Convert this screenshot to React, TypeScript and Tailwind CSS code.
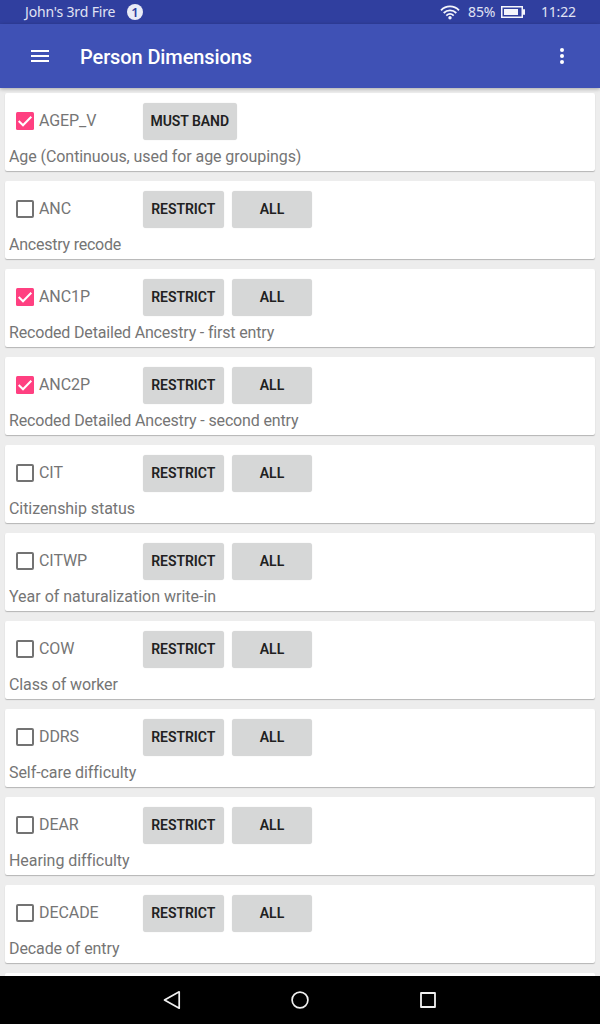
type Dimension = {
  code: string;
  description: string;
  tracking: string;
  checked?: boolean;
  mustBand?: boolean;
};

const dimensions: Dimension[] = [
  { code: "AGEP_V", description: "Age (Continuous, used for age groupings)", tracking: "tracking-[-0.075px]", checked: true, mustBand: true },
  { code: "ANC", description: "Ancestry recode", tracking: "tracking-[-0.23px]" },
  { code: "ANC1P", description: "Recoded Detailed Ancestry - first entry", tracking: "tracking-[-0.17px]", checked: true },
  { code: "ANC2P", description: "Recoded Detailed Ancestry - second entry", tracking: "tracking-[-0.15px]", checked: true },
  { code: "CIT", description: "Citizenship status", tracking: "tracking-[-0.06px]" },
  { code: "CITWP", description: "Year of naturalization write-in", tracking: "tracking-[-0.01px]" },
  { code: "COW", description: "Class of worker", tracking: "tracking-[-0.12px]" },
  { code: "DDRS", description: "Self-care difficulty", tracking: "tracking-[-0.06px]" },
  { code: "DEAR", description: "Hearing difficulty", tracking: "tracking-[-0.06px]" },
  { code: "DECADE", description: "Decade of entry", tracking: "tracking-[-0.1px]" },
];

function StatusBar() {
  return (
    <div className="flex h-6 shrink-0 items-center bg-[#303f9f] pl-6 pr-6 font-['Noto_Sans',sans-serif] text-[14px] leading-6 text-[#e0e3f4]">
      <span className="w-[92px] whitespace-nowrap pl-px text-[14px] tracking-[-0.15px]">John's 3rd Fire</span>
      <span className="ml-[11px] flex size-4 items-center justify-center rounded-full bg-[#eaecf7] text-[13px] font-semibold leading-4 text-[#303f9f]">
        1
      </span>
      <svg className="ml-auto" width="20" height="15" viewBox="0 0 20 15" fill="none" stroke="#f4f5fc" strokeWidth="1.8">
        <path d="M1 5.3C6 .1 14 .1 19 5.3" />
        <path d="M3.7 8C7.3 4.4 12.7 4.4 16.3 8" />
        <path d="M6.3 10.6c2.2-2.1 5.2-2.1 7.4 0" />
        <circle cx="10" cy="12.7" r="1.7" fill="#f4f5fc" stroke="none" />
      </svg>
      <span className="ml-2 w-[29px] whitespace-nowrap text-[14px] tracking-[-0.1px]">85%</span>
      <svg className="ml-1" width="24" height="12" viewBox="0 0 24 12" fill="#f4f5fc">
        <path fillRule="evenodd" d="M0 0h22v3.3h2v5.4h-2V12H0zM1.5 1.5v9h19v-9z" />
        <path d="M3 3h14v6H3z" />
      </svg>
      <span className="ml-4 w-[35px] whitespace-nowrap text-[14px] tracking-[-0.2px]">11:22</span>
    </div>
  );
}

function AppBar() {
  return (
    <header className="relative z-10 flex h-16 shrink-0 items-center bg-[#3f51b5] pl-7 pr-[26px] text-white shadow-[0_1px_4px_rgba(0,0,0,0.3)]">
      <svg width="24" height="24" viewBox="0 0 24 24" fill="currentColor">
        <path d="M3 18h18v-2H3v2zm0-5h18v-2H3v2zm0-7v2h18V6H3z" />
      </svg>
      <h1 className="ml-7 pt-0.5 text-[20px] font-medium leading-6 tracking-[-0.11px]">Person Dimensions</h1>
      <svg className="ml-auto" width="24" height="24" viewBox="0 0 24 24" fill="currentColor">
        <circle cx="12" cy="6" r="2" />
        <circle cx="12" cy="12" r="2" />
        <circle cx="12" cy="18" r="2" />
      </svg>
    </header>
  );
}

function CheckMark({ checked }: { checked?: boolean }) {
  return (
    <svg className="shrink-0" width="24" height="24" viewBox="0 0 24 24">
      {checked ? (
        <>
          <rect x="3" y="3" width="18" height="18" rx="1.5" fill="#ff4081" />
          <path d="M5.7 12l4.3 4.3 8.3-8.6" fill="none" stroke="#fff" strokeWidth="2" />
        </>
      ) : (
        <rect x="4" y="4" width="16" height="16" rx="1" fill="none" stroke="#737373" strokeWidth="2" />
      )}
    </svg>
  );
}

function ActionButton({ label, width }: { label: string; width: string }) {
  return (
    <button
      className={`${width} h-[37px] rounded-[3px] bg-[#d6d7d7] pb-px text-center text-[14px] font-semibold leading-9 tracking-[-0.05px] text-[#212121] shadow-[0_0_1px_rgba(0,0,0,0.16)]`}
    >
      {label}
    </button>
  );
}

function DimensionCard({ item }: { item: Dimension }) {
  return (
    <li className="h-[78px] shrink-0 rounded-[2px] bg-white shadow-[0_1px_1px_rgba(0,0,0,0.24)]">
      <div className="flex h-[56px] items-start pl-2 pt-[10px]">
        <label className="flex h-9 w-[129.5px] items-center text-[16px] leading-6 text-[#757575]">
          <CheckMark checked={item.checked} />
          <span className="ml-0.5 tracking-[-0.08px]">{item.code}</span>
        </label>
        <div className="flex gap-2">
          {item.mustBand ? (
            <ActionButton label="MUST BAND" width="w-[94.5px]" />
          ) : (
            <>
              <ActionButton label="RESTRICT" width="w-[81.5px]" />
              <ActionButton label="ALL" width="w-20" />
            </>
          )}
        </div>
      </div>
      <p className={`-mt-px pl-1 text-[16px] leading-[18px] text-[#757575] ${item.tracking}`}>{item.description}</p>
    </li>
  );
}

function NavigationBar() {
  return (
    <nav className="flex h-12 shrink-0 items-center justify-center gap-[104px] bg-black">
      <svg width="24" height="24" viewBox="0 0 24 24" fill="none" stroke="#f0f0f0" strokeWidth="1.7" strokeLinejoin="round">
        <path d="M19.2 3.8v16.4L4.5 12z" />
      </svg>
      <svg width="24" height="24" viewBox="0 0 24 24" fill="none" stroke="#f0f0f0" strokeWidth="1.7">
        <circle cx="12" cy="12" r="7.9" />
      </svg>
      <svg width="24" height="24" viewBox="0 0 24 24" fill="none" stroke="#f0f0f0" strokeWidth="1.8" strokeLinejoin="round">
        <rect x="5" y="5" width="14" height="14" />
      </svg>
    </nav>
  );
}

export default function App() {
  return (
    <div className="flex h-[1024px] w-[600px] flex-col overflow-hidden bg-[#ededed] font-['Roboto',sans-serif]">
      <StatusBar />
      <AppBar />
      <ul className="flex min-h-0 flex-1 flex-col gap-[10px] overflow-hidden px-[5px] pt-[5px]">
        {dimensions.map((item) => (
          <DimensionCard key={item.code} item={item} />
        ))}
        <li className="h-[78px] shrink-0 rounded-[2px] bg-white" />
      </ul>
      <NavigationBar />
    </div>
  );
}
